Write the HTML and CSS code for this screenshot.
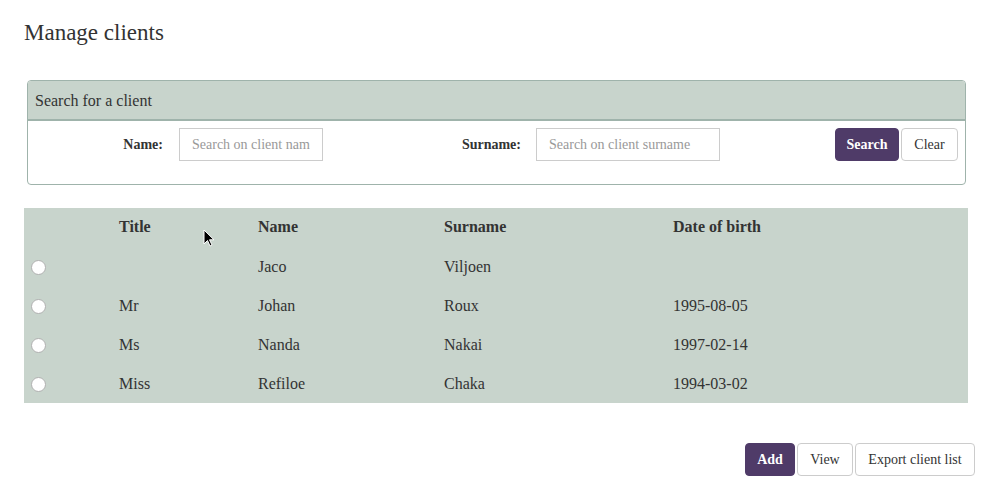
FILE: index.html
```html
<!DOCTYPE html>
<html>
<head>
<meta charset="utf-8">
<link rel="stylesheet" href="styles.css">
</head>
<body>
<div class="page">
  <h1 class="title">Manage clients</h1>
  <div class="panel">
    <div class="panel-head">Search for a client</div>
    <div class="panel-body">
      <label class="lbl lbl-name">Name:</label>
      <input class="inp inp-name" type="text" placeholder="Search on client name">
      <label class="lbl lbl-surname">Surname:</label>
      <input class="inp inp-surname" type="text" placeholder="Search on client surname">
      <div class="spacer"></div>
      <button class="btn btn-primary btn-search">Search</button>
      <button class="btn btn-clear">Clear</button>
    </div>
  </div>
  <table class="clients">
    <thead>
      <tr><th class="c-radio"></th><th class="c-title">Title</th><th class="c-name">Name</th><th class="c-surname">Surname</th><th class="c-dob">Date of birth</th></tr>
    </thead>
    <tbody>
      <tr><td><input class="radio" type="radio" name="c"></td><td></td><td>Jaco</td><td>Viljoen</td><td></td></tr>
      <tr><td><input class="radio" type="radio" name="c"></td><td>Mr</td><td>Johan</td><td>Roux</td><td>1995-08-05</td></tr>
      <tr><td><input class="radio" type="radio" name="c"></td><td>Ms</td><td>Nanda</td><td>Nakai</td><td>1997-02-14</td></tr>
      <tr><td><input class="radio" type="radio" name="c"></td><td>Miss</td><td>Refiloe</td><td>Chaka</td><td>1994-03-02</td></tr>
    </tbody>
  </table>
  <div class="actions">
    <button class="btn btn-primary btn-add">Add</button>
    <button class="btn btn-view">View</button>
    <button class="btn btn-export">Export client list</button>
  </div>
</div>
<svg class="cursor" width="12" height="19" viewBox="0 0 12 19"><path d="M1 1 L1 15 L4.5 11.5 L7 17 L9 16 L6.5 10.8 L11 10.8 Z" fill="#000" stroke="#fff" stroke-width="1"/></svg>
</body>
</html>
```
FILE: styles.css
```css
* { box-sizing: border-box; }
html, body { margin: 0; padding: 0; background: #fff; }
body {
  font-family: "Liberation Serif", "Times New Roman", serif;
  color: #333;
  font-size: 16px;
  width: 993px;
  height: 495px;
  overflow: hidden;
  position: relative;
}
.page { padding: 0 0 0 24px; }
.title {
  font-size: 23px;
  font-weight: normal;
  margin: 0;
  padding-top: 20px;
  line-height: 26px;
  height: 80px;
}
.panel {
  margin-left: 3px;
  width: 939px;
  border: 1px solid #9fb3ab;
  border-radius: 4px;
  overflow: hidden;
}
.panel-head {
  background: #c8d4cc;
  height: 40px;
  border-bottom: 2px solid #9fb3ab;
  padding: 10px 0 0 7px;
  font-size: 16px;
  line-height: 19px;
}
.panel-body {
  display: flex;
  align-items: flex-start;
  padding: 7px 7px 23px 0;
}
.lbl {
  font-weight: bold;
  font-size: 14px;
  text-align: right;
  line-height: 33px;
}
.lbl-name { width: 135px; margin-right: 16px; }
.lbl-surname { width: 198px; margin-right: 15px; }
.inp {
  height: 33px;
  border: 1px solid #ccc;
  padding: 0 12px;
  font-family: "Liberation Serif", "Times New Roman", serif;
  font-size: 14px;
  color: #555;
  outline: none;
  border-radius: 0;
}
.inp::placeholder { color: #999; }
.inp-name { width: 144px; }
.inp-surname { width: 184px; }
.spacer { flex: 1; }
.btn {
  height: 33px;
  border: 1px solid #ccc;
  border-radius: 4px;
  background: #fff;
  color: #333;
  font-family: "Liberation Serif", "Times New Roman", serif;
  font-size: 14px;
  padding: 0;
  margin-left: 2px;
  line-height: 31px;
}
.btn-primary {
  background: #4f3b68;
  border-color: #4f3b68;
  color: #fff;
  font-weight: bold;
}
.btn-search { width: 64px; }
.btn-clear { width: 57px; }
.clients {
  margin-top: 23px;
  width: 944px;
  border-collapse: collapse;
  background: #c8d4cc;
  font-size: 16px;
}
.clients th {
  text-align: left;
  font-weight: bold;
  height: 39px;
  vertical-align: top;
  padding: 10px 0 0 0;
  line-height: 18px;
}
.clients td {
  height: 39px;
  padding: 0;
  vertical-align: middle;
  line-height: 18px;
}
.c-radio { width: 95px; }
.c-title { width: 139px; }
.c-name { width: 186px; }
.c-surname { width: 229px; }
.radio {
  appearance: none;
  -webkit-appearance: none;
  width: 15px;
  height: 15px;
  min-width: 15px;
  margin: 2px 0 0 7px;
  border: 1px solid #b0b0b0;
  border-radius: 50%;
  background: #fff;
  display: block;
}
.actions {
  display: flex;
  justify-content: flex-end;
  width: 951px;
  margin-top: 40px;
}
.btn-add { width: 50px; }
.btn-view { width: 56px; }
.btn-export { width: 120px; }
.cursor { position: absolute; left: 203px; top: 229px; }
```
